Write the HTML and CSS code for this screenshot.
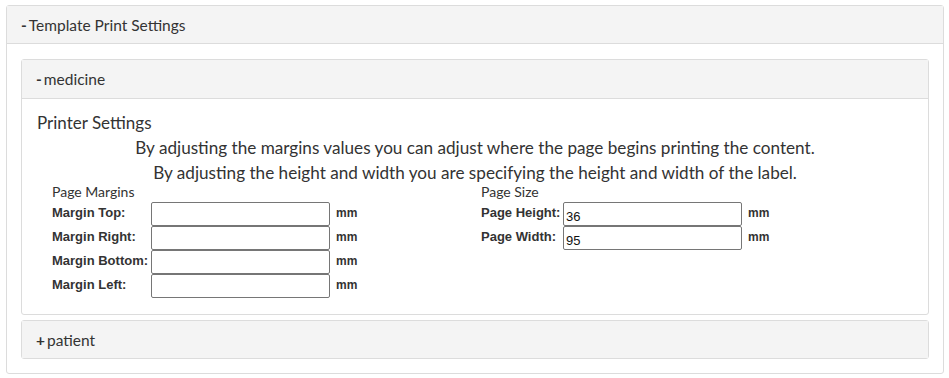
FILE: index.html
```html
<!DOCTYPE html>
<html>
<head>
<meta charset="utf-8">
<link rel="stylesheet" href="styles.css">
</head>
<body>
<div class="panel outer">
  <div class="panel-head"><span class="sign">-</span>Template Print Settings</div>
  <div class="outer-body">
    <div class="panel inner">
      <div class="panel-head"><span class="sign">-</span>medicine</div>
      <div class="inner-body">
        <div class="title">Printer Settings</div>
        <div class="note">By adjusting the margins values you can adjust where the page begins printing the content.</div>
        <div class="note">By adjusting the height and width you are specifying the height and width of the label.</div>
        <div class="cols">
          <div class="col left">
            <div class="sub">Page Margins</div>
            <div class="row"><label>Margin Top:</label><input type="text"><span class="unit">mm</span></div>
            <div class="row"><label>Margin Right:</label><input type="text" class="sh"><span class="unit">mm</span></div>
            <div class="row"><label>Margin Bottom:</label><input type="text" class="sh"><span class="unit">mm</span></div>
            <div class="row"><label>Margin Left:</label><input type="text" class="sh"><span class="unit">mm</span></div>
          </div>
          <div class="col right">
            <div class="sub">Page Size</div>
            <div class="row"><label class="r">Page Height:</label><input type="text" value="36" class="sh"><span class="unit">mm</span></div>
            <div class="row"><label class="r">Page Width:</label><input type="text" value="95"><span class="unit">mm</span></div>
          </div>
        </div>
      </div>
    </div>
    <div class="panel inner closed">
      <div class="panel-head"><span class="sign">+</span>patient</div>
    </div>
  </div>
</div>
</body>
</html>
```
FILE: styles.css
```css
html, body { margin: 0; padding: 0; background: #fff; }
body {
  padding: 5px 3px 0 6px;
  font-family: Lato, "Open Sans", sans-serif;
  color: #333;
}
.panel {
  border: 1px solid #dcdcdc;
  border-radius: 3px;
  background: #fff;
}
.outer { width: 938px; box-sizing: border-box; }
.panel-head {
  background: #f4f4f4;
  border-bottom: 1px solid #dcdcdc;
  height: 38px;
  box-sizing: border-box;
  padding: 0 0 0 14px;
  display: flex;
  align-items: center;
  font-size: 15.5px;
}
.sign { font-weight: 700; margin-right: 2px; }
.outer-body { padding: 15px 15px 14px 14px; }
.inner { width: 908px; box-sizing: border-box; }
.inner .panel-head { height: 39px; }
.closed { margin-top: 5px; }
.closed .panel-head { border-bottom: none; height: 37px; }
.inner-body { padding: 12px 15px 16px 15px; }
.title { font-size: 17px; line-height: 24px; }
.note { font-size: 17.15px; line-height: 25px; text-align: center; }
.cols { display: grid; grid-template-columns: 429px 1fr; padding-left: 15px; }
.sub { font-size: 14px; line-height: 16px; margin-top: -1px; margin-bottom: 2px; }
.row { display: flex; align-items: flex-start; height: 24px; }
label {
  font-family: "Liberation Sans", Arial, sans-serif;
  font-weight: 700; font-size: 13px; color: #333;
  width: 99px; flex: none; padding-top: 3px;
}
label.r { width: 82px; }
input {
  width: 179px; height: 24px; box-sizing: border-box;
  border: 1px solid #767676; border-radius: 2px;
  font-family: "Liberation Sans", Arial, sans-serif; font-size: 13px;
  padding: 4px 2px 0; margin: 0; color: #111;
}
.unit {
  font-family: "Liberation Sans", Arial, sans-serif;
  font-weight: 700; font-size: 12px; margin-left: 6px; padding-top: 4px;
}
```
